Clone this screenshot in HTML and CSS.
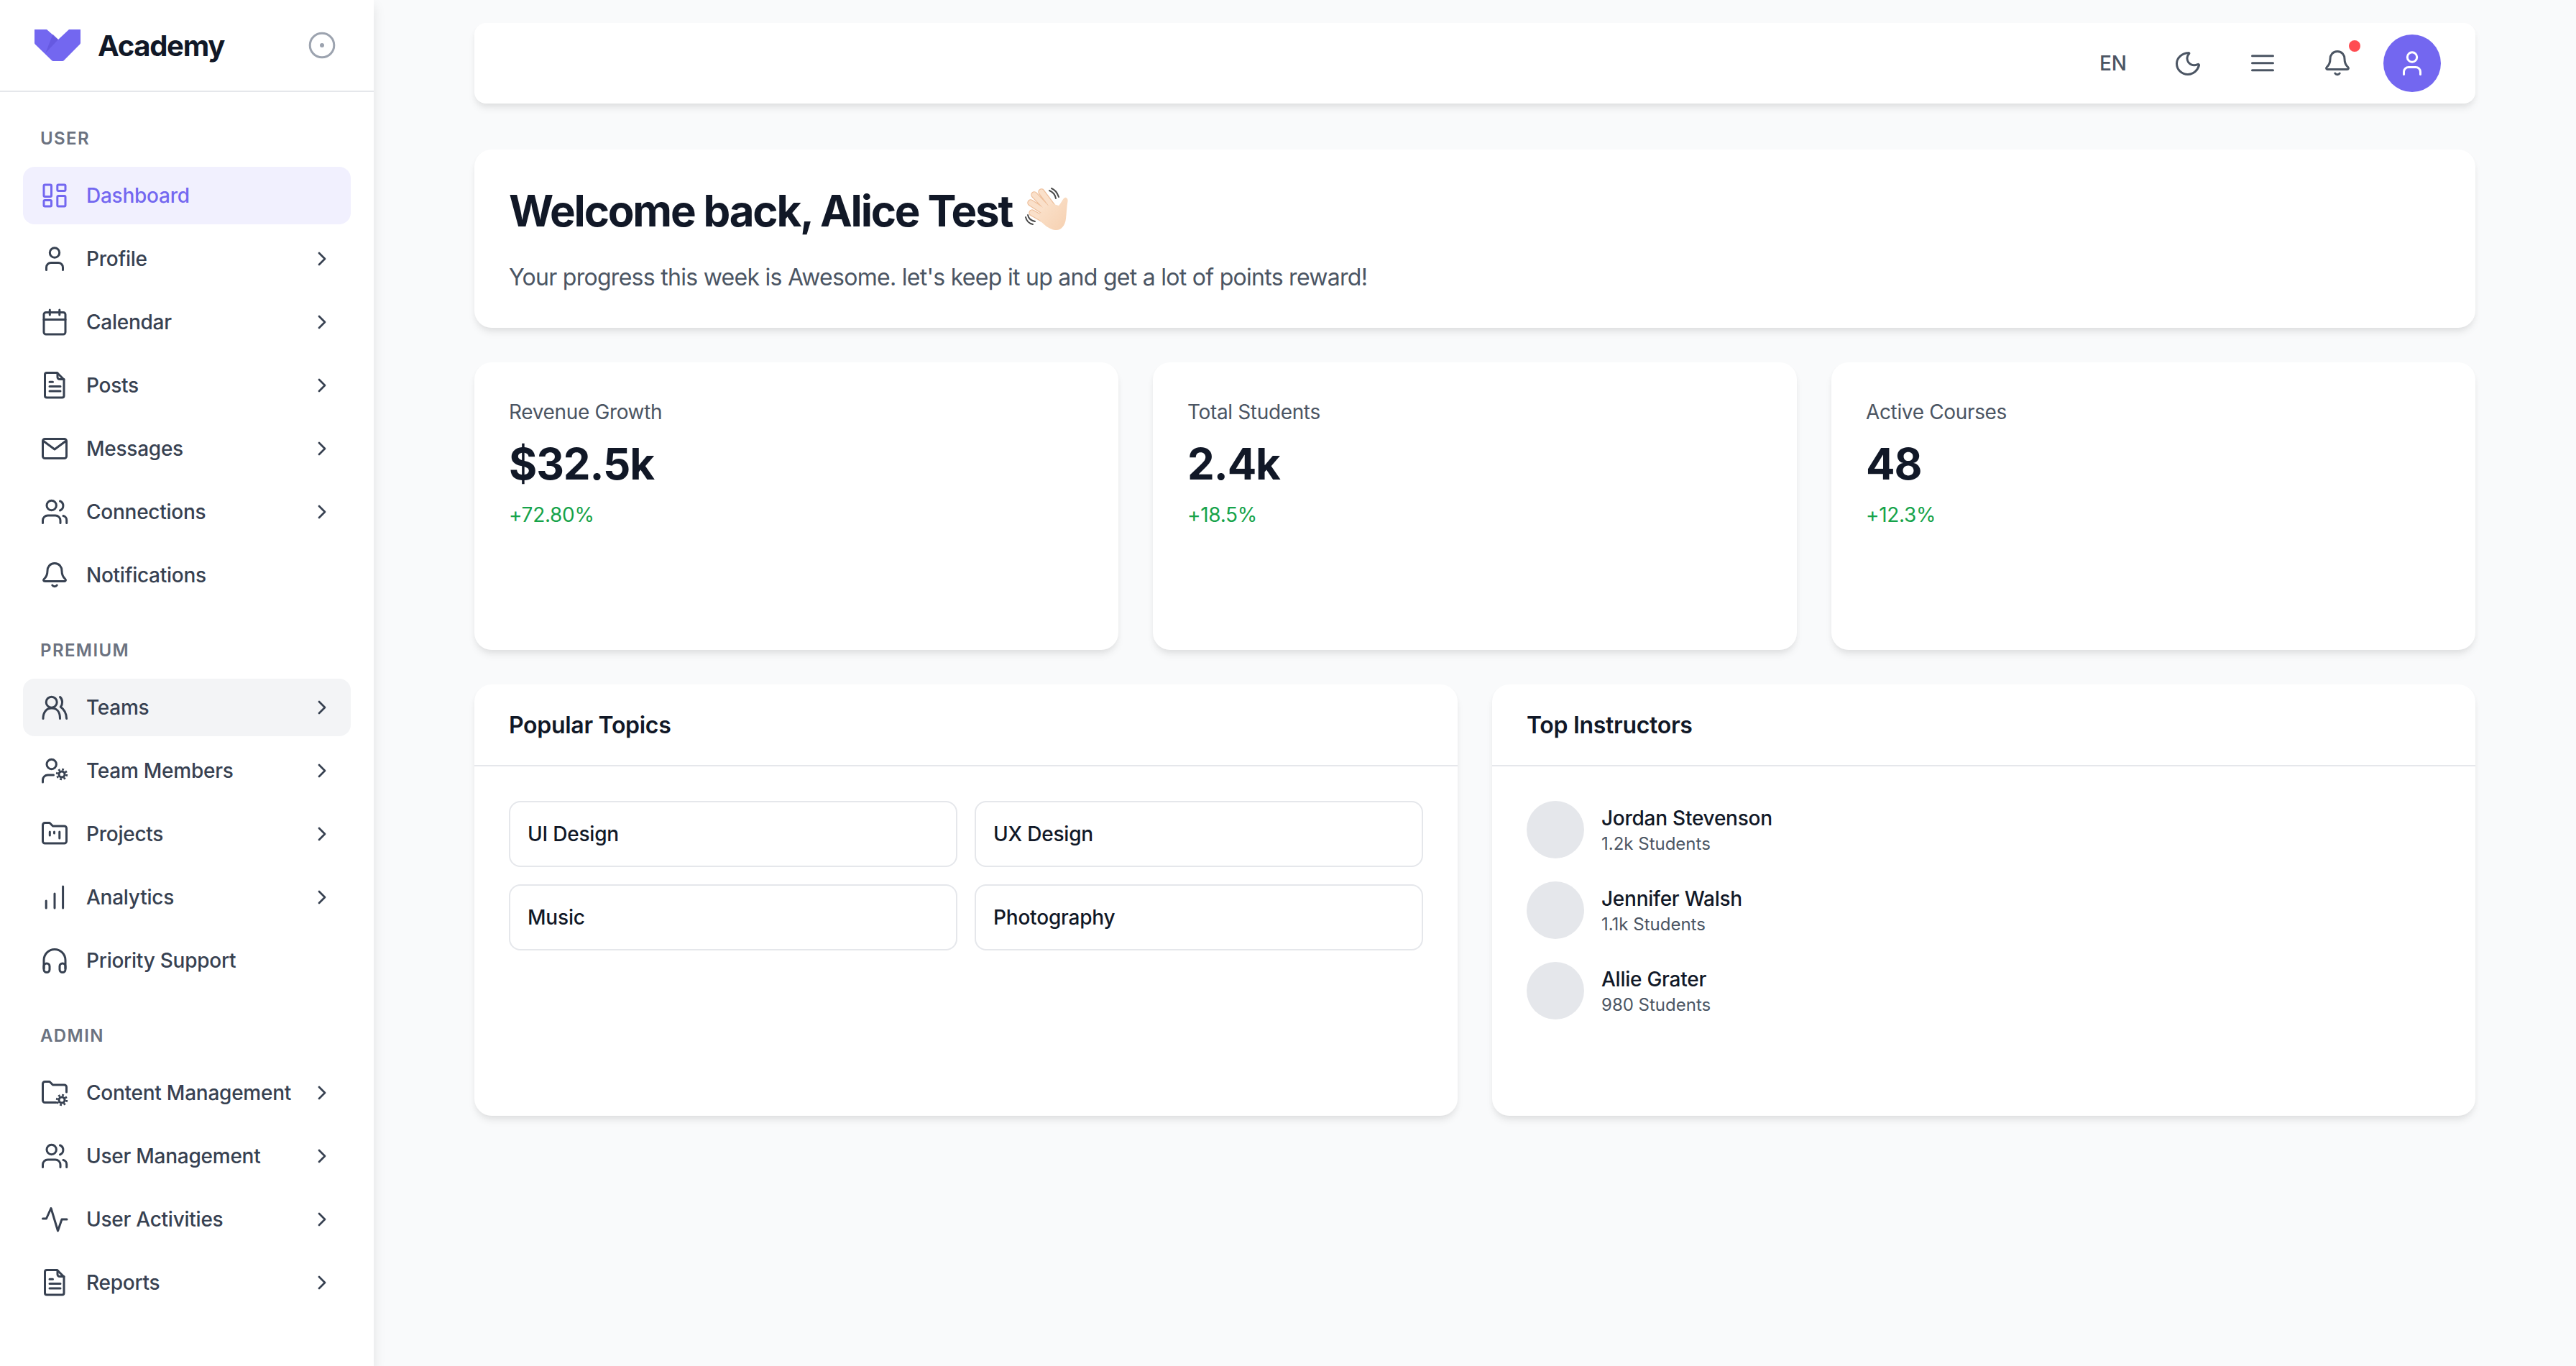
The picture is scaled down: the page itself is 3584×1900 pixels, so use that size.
FILE: index.html
```html
<!DOCTYPE html>
<html>
<head>
	<meta charset="UTF-8">
	<title>Academy Dashboard</title>
	<link rel="stylesheet" href="styles.css">
</head>
<body>
	<svg class="icon-defs" width="0" height="0">
		<symbol id="i-user" viewBox="0 0 40 40"><circle cx="20" cy="11.5" r="6.7"/><path d="M8.5 35.5V32a6.5 6.5 0 0 1 6.5-6.5h10a6.5 6.5 0 0 1 6.5 6.5v3.5"/></symbol>
		<symbol id="i-users" viewBox="0 0 40 40"><circle cx="15.7" cy="11" r="6.7"/><path d="M27.5 5a7 7 0 0 1 0 13"/><path d="M3.500 35.500V32a7 7 0 0 1 7-7h10.500a7 7 0 0 1 7 7v3.500"/><path d="M32 25.500a6 6 0 0 1 4.700 6v4"/></symbol>
		<symbol id="i-doc" viewBox="0 0 40 40"><path d="M9 2.500h14.500L33 12v22.500a2.500 2.500 0 0 1-2.500 2.500H9a2.500 2.500 0 0 1-2.500-2.500V5A2.500 2.500 0 0 1 9 2.500z"/><path d="M24 3v5.500a3 3 0 0 0 3 3h6"/><path d="M13 15.200h4.500M13 21.500h15M13 28h15"/></symbol>
		<symbol id="i-bell" viewBox="0 0 40 40"><path d="M20 3.500c-6.500 0-10 5-10 10.500 0 6-1.500 8.500-4.800 11.500-1.200 1.200-.7 3 1.300 3h27c2 0 2.500-1.800 1.300-3C31.500 22.500 30 20 30 14c0-5.500-3.500-10.500-10-10.500z"/><path d="M16.800 34a3.800 3.800 0 0 0 6.400 0"/></symbol>
		<symbol id="i-chevron" viewBox="0 0 32 32"><path d="M12 8l8 8-8 8"/></symbol>
		<symbol id="i-gear" viewBox="0 0 40 40"><circle cx="30" cy="30" r="4" stroke-width="3"/><circle class="gear-teeth" cx="30" cy="30" r="6.800"/></symbol>
	</svg>

	<aside class="sidebar">
		<div class="brand">
			<svg class="brand-logo" viewBox="0 0 64 44">
				<path fill="#7367f0" d="M0 0h17l16 14L48 0h16v18.500a3 3 0 0 1-1 2.200L41 43a3 3 0 0 1-2 1H26a3 3 0 0 1-2-1L1 20.700a3 3 0 0 1-1-2.200z"/>
				<path fill="#5b4fd6" opacity=".55" d="M15.500 32.500L25.500 6.500 33 14z"/>
			</svg>
			<span class="brand-name">Academy</span>
			<svg class="brand-toggle" viewBox="0 0 40 40"><circle cx="20" cy="20" r="16.800"/><circle class="toggle-dot" cx="20" cy="20" r="3"/></svg>
		</div>

		<nav class="nav">
			<div class="nav-label">USER</div>
			<a class="nav-item active">
				<svg class="nav-icon" viewBox="0 0 40 40"><rect x="5" y="5" width="10.500" height="16.500" rx="1.500"/><rect x="23.800" y="5" width="11.200" height="8.500" rx="1.500"/><rect x="5" y="26.500" width="10.500" height="8.500" rx="1.500"/><rect x="23.800" y="20.500" width="11.200" height="14.500" rx="1.500"/></svg>
				<span>Dashboard</span>
			</a>
			<a class="nav-item">
				<svg class="nav-icon"><use href="#i-user"/></svg>
				<span>Profile</span>
				<svg class="nav-arrow"><use href="#i-chevron"/></svg>
			</a>
			<a class="nav-item">
				<svg class="nav-icon" viewBox="0 0 40 40"><rect x="5" y="6.500" width="30" height="30.500" rx="3"/><path d="M13.300 3v7M26.800 3v7M5 16.500h30"/></svg>
				<span>Calendar</span>
				<svg class="nav-arrow"><use href="#i-chevron"/></svg>
			</a>
			<a class="nav-item">
				<svg class="nav-icon"><use href="#i-doc"/></svg>
				<span>Posts</span>
				<svg class="nav-arrow"><use href="#i-chevron"/></svg>
			</a>
			<a class="nav-item">
				<svg class="nav-icon" viewBox="0 0 40 40"><rect x="3.500" y="6.500" width="33" height="27" rx="3"/><path d="M4.500 9.500L20 21l15.500-11.500"/></svg>
				<span>Messages</span>
				<svg class="nav-arrow"><use href="#i-chevron"/></svg>
			</a>
			<a class="nav-item">
				<svg class="nav-icon"><use href="#i-users"/></svg>
				<span>Connections</span>
				<svg class="nav-arrow"><use href="#i-chevron"/></svg>
			</a>
			<a class="nav-item">
				<svg class="nav-icon"><use href="#i-bell"/></svg>
				<span>Notifications</span>
			</a>

			<div class="nav-label">PREMIUM</div>
			<a class="nav-item hover">
				<svg class="nav-icon" viewBox="0 0 40 40"><circle cx="15.700" cy="12.700" r="7.500"/><path d="M4 35.500C4 26 9 21 16 21s11.500 5 11.500 14.500"/><path d="M27.500 5.500c4 3.500 4 10 .8 13.800 5 3.500 8 9 8.300 16.200"/></svg>
				<span>Teams</span>
				<svg class="nav-arrow"><use href="#i-chevron"/></svg>
			</a>
			<a class="nav-item">
				<svg class="nav-icon" viewBox="0 0 40 40"><circle cx="15.700" cy="11" r="6.700"/><path d="M3.500 36v-3a7 7 0 0 1 7-7h8"/><use href="#i-gear" y="-5"/></svg>
				<span>Team Members</span>
				<svg class="nav-arrow"><use href="#i-chevron"/></svg>
			</a>
			<a class="nav-item">
				<svg class="nav-icon" viewBox="0 0 40 40"><path d="M3.500 7.500a3 3 0 0 1 3-3H13l4.500 4.500h16a3 3 0 0 1 3 3V30a3 3 0 0 1-3 3h-27a3 3 0 0 1-3-3z"/><path d="M13.300 17v5M19.500 17v2M26.800 17v9"/></svg>
				<span>Projects</span>
				<svg class="nav-arrow"><use href="#i-chevron"/></svg>
			</a>
			<a class="nav-item">
				<svg class="nav-icon" viewBox="0 0 40 40"><path d="M8.200 25v10M20 15v20M31.600 5v30"/></svg>
				<span>Analytics</span>
				<svg class="nav-arrow"><use href="#i-chevron"/></svg>
			</a>
			<a class="nav-item">
				<svg class="nav-icon" viewBox="0 0 40 40"><path d="M5 31V19.500a15 15 0 0 1 30 0V31"/><rect x="5" y="24" width="8" height="12.500" rx="4"/><rect x="27" y="24" width="8" height="12.500" rx="4"/></svg>
				<span>Priority Support</span>
			</a>

			<div class="nav-label">ADMIN</div>
			<a class="nav-item">
				<svg class="nav-icon" viewBox="0 0 40 40"><path d="M22 33.500H6.500a3 3 0 0 1-3-3V7.500a3 3 0 0 1 3-3H13L17.500 9h16a3 3 0 0 1 3 3v7"/><use href="#i-gear"/></svg>
				<span>Content Management</span>
				<svg class="nav-arrow"><use href="#i-chevron"/></svg>
			</a>
			<a class="nav-item">
				<svg class="nav-icon"><use href="#i-users"/></svg>
				<span>User Management</span>
				<svg class="nav-arrow"><use href="#i-chevron"/></svg>
			</a>
			<a class="nav-item">
				<svg class="nav-icon" viewBox="0 0 40 40"><path d="M3.500 19h5L15 4.500 24.500 36l5.500-16h7"/></svg>
				<span>User Activities</span>
				<svg class="nav-arrow"><use href="#i-chevron"/></svg>
			</a>
			<a class="nav-item">
				<svg class="nav-icon"><use href="#i-doc"/></svg>
				<span>Reports</span>
				<svg class="nav-arrow"><use href="#i-chevron"/></svg>
			</a>
		</nav>
	</aside>

	<main class="main">
		<header class="topbar">
			<span class="top-btn top-lang">EN</span>
			<span class="top-btn">
				<svg class="top-icon" viewBox="0 0 40 40"><path d="M20.500 5.500C12 6 4.500 12.500 4.500 20.500 4.500 29 11.500 35.500 20 35.500c7.500 0 13.500-5.500 15.500-12.500.2-1.500-1-2-2-1.300C26 25 19.500 20 19 13.500c-.2-2.500 1-5 2.500-6.500.8-1 .2-1.600-1-1.500z"/></svg>
			</span>
			<span class="top-btn">
				<svg class="top-icon" viewBox="0 0 40 40"><path d="M5.500 9.700h29M5.500 19.700h29M5.500 29.700h29"/></svg>
			</span>
			<span class="top-btn">
				<svg class="top-icon"><use href="#i-bell"/></svg>
				<span class="top-dot"></span>
			</span>
			<span class="top-avatar">
				<svg class="top-icon"><use href="#i-user"/></svg>
			</span>
		</header>

		<section class="card welcome">
			<h1 class="welcome-title">
				<span>Welcome back, Alice Test</span>
				<svg class="wave" viewBox="0 0 84 84">
					<defs>
						<linearGradient id="skin" x1="0" y1="0" x2="1" y2="1">
							<stop offset="0" stop-color="#fbe4cf"/>
							<stop offset="1" stop-color="#f6d0b0"/>
						</linearGradient>
					</defs>
					<g fill="none" stroke-linecap="round">
						<path stroke="#eebf9b" stroke-width="9.500" d="M33 16l15 20M23 20l20 21M18 31l23 15M20 45l21 12"/>
						<path stroke="#fae0ca" stroke-width="7" d="M33 16l15 20M23 20l20 21M18 31l23 15M20 45l21 12"/>
						<path stroke="#4a4a4a" stroke-width="2" d="M44 14c5 2 8 6 9 11M47 11c5 2 8 6 10 12M11 51c1 5 5 9 10 10M14 48c1 5 5 8 10 9"/>
					</g>
					<path fill="url(#skin)" d="M37 38l10-6 10 3c3-3 5-8 7-10 3-3 6 0 5.500 4-1.500 9-1.500 16-2.500 24-1 10-7 17-15 16-8-1-16-7-24-17z"/>
				</svg>
			</h1>
			<p class="welcome-text">Your progress this week is Awesome. let's keep it up and get a lot of points reward!</p>
		</section>

		<section class="stats">
			<div class="card stat">
				<div class="stat-label">Revenue Growth</div>
				<div class="stat-value">$32.5k</div>
				<div class="stat-change">+72.80%</div>
			</div>
			<div class="card stat">
				<div class="stat-label">Total Students</div>
				<div class="stat-value">2.4k</div>
				<div class="stat-change">+18.5%</div>
			</div>
			<div class="card stat">
				<div class="stat-label">Active Courses</div>
				<div class="stat-value">48</div>
				<div class="stat-change">+12.3%</div>
			</div>
		</section>

		<section class="panels">
			<div class="card panel">
				<h2 class="panel-title">Popular Topics</h2>
				<div class="panel-body topics">
					<div class="topic">UI Design</div>
					<div class="topic">UX Design</div>
					<div class="topic">Music</div>
					<div class="topic">Photography</div>
				</div>
			</div>
			<div class="card panel">
				<h2 class="panel-title">Top Instructors</h2>
				<div class="panel-body instructors">
					<div class="instructor">
						<div class="instructor-pic"></div>
						<div>
							<div class="instructor-name">Jordan Stevenson</div>
							<div class="instructor-sub">1.2k Students</div>
						</div>
					</div>
					<div class="instructor">
						<div class="instructor-pic"></div>
						<div>
							<div class="instructor-name">Jennifer Walsh</div>
							<div class="instructor-sub">1.1k Students</div>
						</div>
					</div>
					<div class="instructor">
						<div class="instructor-pic"></div>
						<div>
							<div class="instructor-name">Allie Grater</div>
							<div class="instructor-sub">980 Students</div>
						</div>
					</div>
				</div>
			</div>
		</section>
	</main>
</body>
</html>
```

FILE: styles.css
```css
* {
	box-sizing: border-box;
}

body {
	background-color: #f9fafb;
	color: #111827;
	display: flex;
	font-family: Inter, "Liberation Sans", sans-serif;
	height: 1900px;
	margin: 0;
	overflow: hidden;
}

.icon-defs {
	position: absolute;
}

svg {
	fill: none;
	stroke: currentColor;
	stroke-linecap: round;
	stroke-linejoin: round;
	stroke-width: 3;
}

.gear-teeth {
	stroke-dasharray: 2.7 2.64;
	stroke-linecap: butt;
	stroke-width: 2.8;
}

/* sidebar */
.sidebar {
	background-color: #fff;
	box-shadow: 0 8px 16px rgba(0,0,0,0.1);
	flex: 0 0 520px;
	height: 100%;
	position: relative;
}

.brand {
	align-items: center;
	border-bottom: 2px solid #e5e7eb;
	display: flex;
	height: 128px;
	padding: 0 32px 0 48px;
}

.brand-logo {
	flex: none;
	height: 44px;
	stroke: none;
	width: 64px;
}

.brand-name {
	color: #111827;
	flex: 1;
	font-size: 40px;
	font-weight: 700;
	letter-spacing: -1.3px;
	margin-left: 24px;
}

.brand-toggle {
	color: #9ca3af;
	flex: none;
	height: 40px;
	margin-right: 20px;
	width: 40px;
}

.toggle-dot {
	fill: #9ca3af;
	stroke: none;
}

.nav {
	padding: 0 32px;
}

.nav-label {
	color: #6b7280;
	font-size: 24px;
	font-weight: 600;
	letter-spacing: 1.4px;
	line-height: 32px;
	margin: 49px 0 23px;
	padding-left: 24px;
}

.nav-item {
	align-items: center;
	border-radius: 16px;
	color: #374151;
	display: flex;
	font-size: 28px;
	font-weight: 500;
	height: 80px;
	letter-spacing: -0.25px;
	margin-bottom: 8px;
	padding: 0 24px;
}

.nav-item span {
	flex: 1;
}

.nav-item.active {
	background-color: #f1f0fe;
	color: #7367f0;
}

.nav-item.hover {
	background-color: #f3f4f6;
}

.nav-icon {
	flex: none;
	height: 40px;
	margin-right: 24px;
	width: 40px;
}

.nav-arrow {
	flex: none;
	height: 32px;
	stroke-width: 2.7;
	width: 32px;
}

/* main */
.main {
	flex: 1;
	min-width: 0;
	padding: 32px 140px 0;
}

.card {
	background-color: #fff;
	border-radius: 24px;
	box-shadow: 0 8px 12px -2px rgba(0,0,0,0.08), 0 4px 8px -2px rgba(0,0,0,0.05);
}

.topbar {
	align-items: center;
	background-color: #fff;
	border-radius: 16px;
	box-shadow: 0 8px 12px -2px rgba(0,0,0,0.08), 0 4px 8px -2px rgba(0,0,0,0.05);
	color: #4b5563;
	display: flex;
	gap: 24px;
	height: 112px;
	justify-content: flex-end;
	margin-bottom: 64px;
	padding: 0 48px;
}

.top-btn {
	align-items: center;
	display: flex;
	height: 80px;
	justify-content: center;
	position: relative;
	width: 80px;
}

.top-lang {
	font-size: 28px;
	font-weight: 500;
}

.top-icon {
	height: 40px;
	width: 40px;
}

.top-dot {
	background-color: #ff4c51;
	border-radius: 50%;
	height: 16px;
	position: absolute;
	right: 8px;
	top: 8px;
	width: 16px;
}

.top-avatar {
	align-items: center;
	background-color: #7367f0;
	border-radius: 50%;
	color: #fff;
	display: flex;
	height: 80px;
	justify-content: center;
	width: 80px;
}

.welcome {
	height: 248px;
	margin-bottom: 48px;
	padding: 49px 48px 48px;
}

.welcome-title {
	align-items: center;
	color: #111827;
	display: flex;
	font-size: 60px;
	font-weight: 700;
	gap: 8px;
	height: 72px;
	letter-spacing: -2.2px;
	line-height: 72px;
	margin: 0 0 33px;
}

.wave {
	flex: none;
	height: 84px;
	stroke: none;
	width: 84px;
}

.welcome-text {
	color: #4b5563;
	font-size: 32px;
	letter-spacing: -0.72px;
	line-height: 48px;
	margin: 0;
}

.stats {
	display: grid;
	gap: 48px;
	grid-template-columns: repeat(3, 1fr);
	margin-bottom: 48px;
}

.stat {
	height: 400px;
	padding: 48px;
}

.stat-label {
	color: #4b5563;
	font-size: 28px;
	letter-spacing: -0.35px;
	line-height: 40px;
	padding-top: 1px;
}

.stat-value {
	color: #111827;
	font-size: 60px;
	font-weight: 700;
	letter-spacing: -1.1px;
	line-height: 72px;
	margin-top: 16px;
}

.stat-change {
	color: #16a34a;
	font-size: 28px;
	letter-spacing: -0.3px;
	line-height: 40px;
	margin-top: 15px;
}

.panels {
	display: grid;
	gap: 48px;
	grid-template-columns: repeat(2, 1fr);
}

.panel {
	height: 600px;
}

.panel-title {
	border-bottom: 2px solid #e5e7eb;
	color: #111827;
	font-size: 32px;
	font-weight: 600;
	letter-spacing: -0.3px;
	line-height: 48px;
	margin: 0;
	padding: 33px 48px 31px;
}

.panel-body {
	padding: 48px;
}

.topics {
	display: grid;
	gap: 24px;
	grid-template-columns: repeat(2, 1fr);
}

.topic {
	border: 2px solid #e5e7eb;
	border-radius: 16px;
	color: #111827;
	font-size: 28px;
	font-weight: 500;
	letter-spacing: -0.2px;
	line-height: 40px;
	padding: 24px;
}

.instructors {
	display: flex;
	flex-direction: column;
	gap: 32px;
}

.instructor {
	align-items: center;
	display: flex;
	gap: 24px;
}

.instructor-pic {
	background-color: #e5e7eb;
	border-radius: 50%;
	height: 80px;
	width: 80px;
}

.instructor-name {
	color: #111827;
	font-size: 28px;
	font-weight: 500;
	letter-spacing: -0.25px;
	line-height: 40px;
}

.instructor-sub {
	color: #4b5563;
	font-size: 24px;
	line-height: 32px;
}
```
